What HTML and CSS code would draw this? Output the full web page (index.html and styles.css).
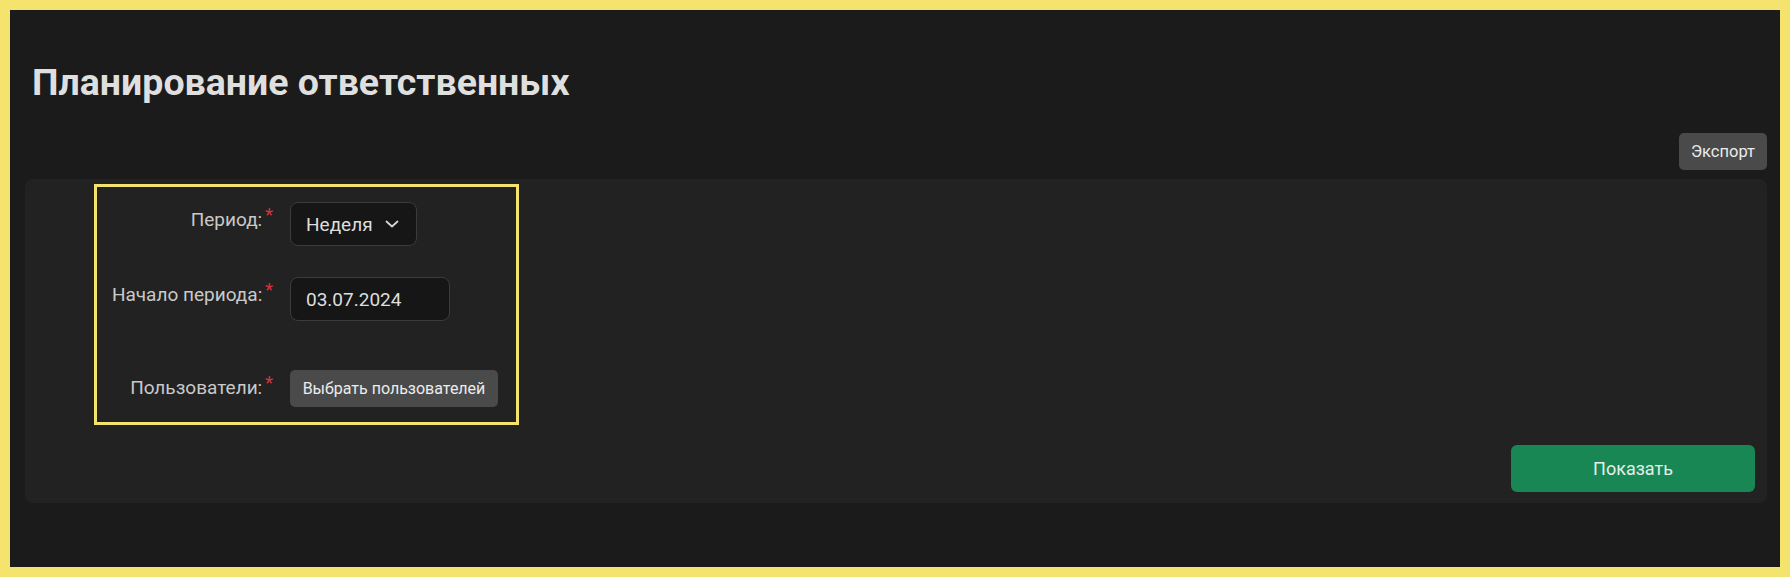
FILE: index.html
```html
<!DOCTYPE html>
<html lang="ru">
<head>
  <meta charset="UTF-8">
  <meta name="viewport" content="width=device-width, initial-scale=1.0">
  <title>Планирование ответственных</title>
  <link rel="stylesheet" href="styles.css">
</head>
<body>
<div class="page">
  <h1>Планирование ответственных</h1>

  <div class="toolbar">
    <button class="btn btn-secondary btn-export">Экспорт</button>
  </div>

  <div class="card">
    <div class="filters">
      <div class="form-row">
        <label class="form-label">Период:<span class="required">*</span></label>
        <button class="select">
          <span>Неделя</span>
          <svg class="chevron" width="14" height="8" viewBox="0 0 14 8">
            <path d="M1.5 1.5 L7 6.5 L12.5 1.5" fill="none" stroke="#d6d6d6" stroke-width="1.8" stroke-linecap="round" stroke-linejoin="round"/>
          </svg>
        </button>
      </div>

      <div class="form-row form-row-wide">
        <label class="form-label" for="start">Начало периода:<span class="required">*</span></label>
        <input class="date-input" type="text" id="start" value="03.07.2024">
      </div>

      <div class="form-row">
        <label class="form-label">Пользователи:<span class="required">*</span></label>
        <button class="btn btn-secondary btn-users">Выбрать пользователей</button>
      </div>
    </div>

    <div class="actions">
      <button class="btn btn-success">Показать</button>
    </div>
  </div>
</div>
</body>
</html>
```

FILE: styles.css
```css
* {
  box-sizing: border-box;
}
html, body {
  margin: 0;
  padding: 0;
}
body {
  font-family: Roboto, "Noto Sans", Arial, sans-serif;
  background-color: #f4e46d;
  color: #dcdcdc;
}
.page {
  height: 577px;
  border: 10px solid #f4e46d;
  background-color: #1b1b1b;
  padding: 0 13px 0 15px;
}
h1 {
  margin: 48px 0 0 7px;
  font-size: 37.5px;
  line-height: 48px;
  font-weight: 700;
  color: #dfdfdf;
}
.toolbar {
  display: flex;
  justify-content: flex-end;
  margin-top: 27px;
}
.btn {
  font-family: inherit;
  border: none;
  cursor: pointer;
  color: #ececec;
}
.btn-secondary {
  height: 37px;
  padding: 0 11px;
  background-color: #4a4a4a;
  border-radius: 5px;
  font-size: 16px;
}
.btn-export {
  padding: 0 12px;
  font-size: 16.5px;
}
.card {
  margin-top: 9px;
  background-color: #222222;
  border-radius: 8px;
  padding: 5px 12px 11px 69px;
}
.filters {
  width: 425px;
  border: 3px solid #f4e46d;
  padding: 15px 0 15px 0;
}
.form-row {
  display: grid;
  grid-template-columns: 180px auto;
  column-gap: 13px;
  align-items: start;
  margin-bottom: 31px;
}
.form-row:last-child {
  margin-bottom: 0;
}
.form-row-wide {
  margin-bottom: 49px;
}
.form-label {
  text-align: right;
  font-size: 19px;
  line-height: 26px;
  color: #c9c9c9;
  padding-right: 4px;
}
.required {
  color: #d9323d;
  margin-left: 3px;
  vertical-align: 5px;
  font-size: 18px;
}
.select {
  display: flex;
  align-items: center;
  justify-content: space-between;
  width: 127px;
  height: 44px;
  padding: 0 17px 0 15px;
  background-color: #161616;
  border: 1px solid #3b3b3b;
  border-radius: 8px;
  font-family: inherit;
  font-size: 19px;
  color: #dedede;
}
.date-input {
  width: 160px;
  height: 44px;
  padding: 0 15px;
  background-color: #161616;
  border: 1px solid #3b3b3b;
  border-radius: 8px;
  font-family: inherit;
  font-size: 19px;
  color: #dedede;
  outline: none;
}
.btn-users {
  justify-self: start;
  width: 208px;
  padding: 0 10px;
}
.actions {
  display: flex;
  justify-content: flex-end;
  margin-top: 20px;
}
.btn-success {
  width: 244px;
  height: 47px;
  background-color: #198754;
  border-radius: 6px;
  font-size: 18px;
  color: #e4efe9;
}
```
